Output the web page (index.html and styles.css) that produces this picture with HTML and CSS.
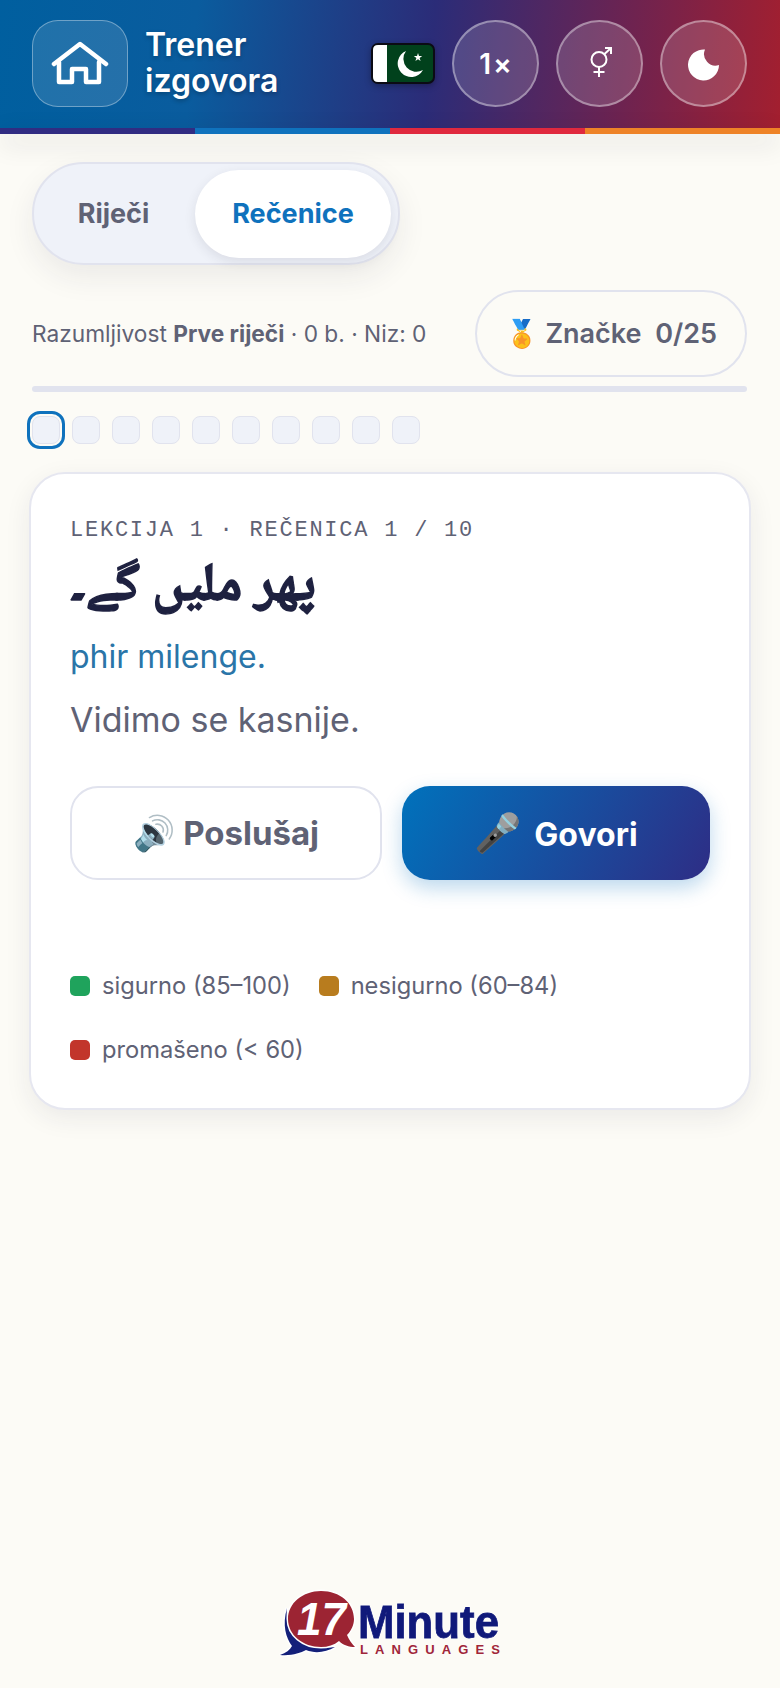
FILE: index.html
```html
<!DOCTYPE html>
<html lang="hr">
  <head>
    <meta charset="utf-8" />
    <title>Trener izgovora</title>
    <link rel="stylesheet" href="styles.css" />
  </head>
  <body>
    <header class="topbar">
      <a class="home-btn" href="#" aria-label="Home">
        <svg width="58" height="46" viewBox="0 0 58 46" fill="none" stroke="#fff" stroke-width="4.5" stroke-linecap="round" stroke-linejoin="round">
          <path d="M3 23 L29 3 L55 23" />
          <path d="M8 21 V41 H21 V28 H35 V41 H48 V21" />
        </svg>
      </a>
      <div class="app-title">Trener<br />izgovora</div>
      <svg class="flag" width="64" height="41" viewBox="0 0 64 41">
        <rect x="1" y="1" width="62" height="39" rx="6" fill="#01411c" stroke="#0b0b14" stroke-width="2" />
        <path d="M7 2 H16 V39 H7 Q2 39 2 34 V7 Q2 2 7 2 Z" fill="#fff" />
        <path d="M35 8 A13.5 13.5 0 1 0 52 27 A13 13 0 0 1 35 8 Z" fill="#fff" />
        <path d="M47 10 L48 13 L51.2 13 L48.6 15 L49.6 18 L47 16.2 L44.4 18 L45.4 15 L42.8 13 L46 13 Z" fill="#fff" />
      </svg>
      <button class="round-btn speed">1×</button>
      <button class="round-btn" aria-label="Spol">
        <svg class="gender-icon" width="24" height="30" viewBox="0 0 24 30" fill="none" stroke="#fff" stroke-width="2">
          <circle cx="10" cy="12.5" r="7.5" />
          <path d="M10 20 V30 M4.5 25 H15.5 M15.5 7 L22 1 M16 1 H22 V7" />
        </svg>
      </button>
      <button class="round-btn" aria-label="Tema">
        <svg class="moon-icon" width="32" height="32" viewBox="0 0 32 32" fill="#fff">
          <path d="M17 0.5 A15.5 15.5 0 1 0 31 16 A11.5 11.5 0 0 1 17 0.5 Z" />
        </svg>
      </button>
    </header>
    <div class="stripe">
      <span class="s1"></span><span class="s2"></span><span class="s3"></span><span class="s4"></span>
    </div>

    <main class="content">
      <div class="mode-toggle">
        <button class="mode">Riječi</button>
        <button class="mode active">Rečenice</button>
      </div>

      <div class="status-row">
        <div class="status">Razumljivost <b>Prve riječi</b> · 0 b. · Niz: 0</div>
        <button class="badges"><span class="emoji">🏅</span> Značke&nbsp; 0/25</button>
      </div>

      <div class="progress"></div>

      <div class="steps">
        <span class="step current"></span>
        <span class="step"></span>
        <span class="step"></span>
        <span class="step"></span>
        <span class="step"></span>
        <span class="step"></span>
        <span class="step"></span>
        <span class="step"></span>
        <span class="step"></span>
        <span class="step"></span>
      </div>

      <section class="card">
        <div class="lesson">LEKCIJA 1 · REČENICA 1 / 10</div>
        <div class="urdu" lang="ur" dir="rtl">پھر ملیں گے۔</div>
        <div class="translit">phir milenge.</div>
        <div class="meaning">Vidimo se kasnije.</div>
        <div class="actions">
          <button class="action listen"><span class="emoji">🔊</span> Poslušaj</button>
          <button class="action speak"><span class="emoji">🎤</span> Govori</button>
        </div>
        <div class="legend">
          <span class="legend-item"><i class="dot green"></i>sigurno (85–100)</span>
          <span class="legend-item"><i class="dot amber"></i>nesigurno (60–84)</span>
          <span class="legend-item"><i class="dot red"></i>promašeno (&lt; 60)</span>
        </div>
      </section>

      <footer class="footer">
        <svg width="260" height="118" viewBox="0 0 260 118">
          <path d="M27 38 C22 55 26 68 32 76 C30 80 26 83 20 85 C32 86 40 83 46 80 C56 84 66 82 75 77 C60 79 40 76 31 62 C27 54 26 46 27 38 Z" fill="#14207a" stroke="#fff" stroke-width="3" paint-order="stroke" />
          <path d="M61 21 C80 21 94 33 94 49 C94 55 91 61 87 65 C89 70 92 74 95 77 C89 77 83 75 79 71 C74 75 68 77 61 77 C43 77 28 65 28 49 C28 33 43 21 61 21 Z" fill="#9c2433" stroke="#fff" stroke-width="3" paint-order="stroke" />
          <text class="logo-17" x="37" y="65" textLength="49" lengthAdjust="spacingAndGlyphs">17</text>
          <text class="logo-minute" x="98" y="68" textLength="141" lengthAdjust="spacingAndGlyphs">Minute</text>
          <text class="logo-lang" x="100" y="84" textLength="140">LANGUAGES</text>
        </svg>
      </footer>
    </main>
  </body>
</html>
```

FILE: styles.css
```css
* {
  box-sizing: border-box;
}
html,
body {
  margin: 0;
  padding: 0;
}
body {
  width: 780px;
  height: 1688px;
  overflow: hidden;
  display: flex;
  flex-direction: column;
  background-color: #fcfbf6;
  font-family: Inter, "Noto Sans", sans-serif;
  color: #5f6275;
}
button {
  font-family: inherit;
  cursor: pointer;
}
.emoji {
  font-family: "Noto Color Emoji", sans-serif;
  font-weight: 400;
}

/* top bar */
.topbar {
  height: 128px;
  padding: 0 33px 1px 32px;
  display: flex;
  align-items: center;
  background: linear-gradient(96deg, #005f9f 0%, #0a5c9e 25%, #2b2c78 55%, #6e2350 80%, #a31f2f 100%);
}
.home-btn {
  width: 96px;
  height: 87px;
  display: flex;
  align-items: center;
  justify-content: center;
  border: 1.5px solid rgba(255, 255, 255, 0.35);
  border-radius: 26px;
  background-color: rgba(255, 255, 255, 0.12);
}
.app-title {
  margin-left: 17px;
  color: #fff;
  font-size: 32px;
  font-weight: 600;
  line-height: 36px;
  position: relative;
  top: -1px;
  text-shadow: 0 2px 4px rgba(0, 0, 0, 0.25);
}
.flag {
  margin-left: auto;
  margin-right: 17px;
  filter: drop-shadow(0 2px 3px rgba(0, 0, 0, 0.3));
}
.round-btn {
  width: 87px;
  height: 87px;
  padding: 0;
  display: flex;
  align-items: center;
  justify-content: center;
  margin-left: 17px;
  border: 2px solid rgba(255, 255, 255, 0.38);
  border-radius: 50%;
  background-color: rgba(255, 255, 255, 0.15);
  color: #fff;
}
.flag + .round-btn {
  margin-left: 0;
}
.speed {
  padding-left: 2px;
  font-size: 28px;
  font-weight: 600;
  letter-spacing: 2px;
}
.gender-icon {
  margin: -4px 0 0 2px;
}
.moon-icon {
  margin-top: 3px;
}
.stripe {
  height: 6px;
  display: flex;
  box-shadow: 0 8px 26px rgba(30, 30, 40, 0.2);
}
.stripe span {
  flex: 1;
}
.s1 {
  background-color: #312c82;
}
.s2 {
  background-color: #0f72bd;
}
.s3 {
  background-color: #e0293e;
}
.s4 {
  background-color: #ee8327;
}

/* main column */
.content {
  flex: 1;
  display: flex;
  flex-direction: column;
  padding: 28px 33px 0 32px;
}
.mode-toggle {
  width: 368px;
  height: 103px;
  display: flex;
  align-items: center;
  justify-content: space-between;
  padding: 0 7px 0 6px;
  border: 2px solid #e1e3ee;
  border-radius: 52px;
  background-color: #eff2f9;
  box-shadow: 0 12px 30px rgba(40, 40, 60, 0.08);
}
.mode {
  height: 88px;
  padding: 0;
  border: 0;
  border-radius: 44px;
  background: none;
  font-size: 27px;
  font-weight: 700;
  color: #5f6275;
}
.mode:first-child {
  width: 147px;
}
.mode.active {
  width: 196px;
  background-color: #fff;
  color: #0f72bd;
  box-shadow: 0 4px 12px rgba(40, 40, 60, 0.1);
}
.status-row {
  margin-top: 25px;
  display: flex;
  align-items: center;
  justify-content: space-between;
}
.status {
  font-size: 22.7px;
}
.badges {
  width: 272px;
  height: 87px;
  padding: 0;
  border: 2px solid #e1e3ee;
  border-radius: 44px;
  background: none;
  font-size: 27px;
  font-weight: 600;
  color: #5f6275;
}
.progress {
  height: 6px;
  margin-top: 9px;
  border-radius: 3px;
  background-color: #e1e3ee;
}
.steps {
  margin-top: 24px;
  display: flex;
  gap: 12px;
}
.step {
  width: 28px;
  height: 28px;
  border: 1.5px solid #e1e3ee;
  border-radius: 8px;
  background-color: #eff2f9;
}
.step.current {
  outline: 3.5px solid #0f72bd;
  outline-offset: 2px;
}

/* card */
.card {
  margin: 28px -4px 0 -3px;
  height: 638px;
  padding: 43px 39px 0;
  border: 2px solid #e6e7f0;
  border-radius: 36px;
  background-color: #fff;
  box-shadow: 0 8px 26px rgba(40, 40, 60, 0.08);
}
.lesson {
  font-family: "Liberation Mono", monospace;
  font-size: 22px;
  letter-spacing: 0.08em;
  line-height: 28px;
  color: #5f6275;
}
.urdu {
  margin-top: 8px;
  font-family: "Noto Naskh Arabic", "Noto Sans Arabic", "DejaVu Sans", sans-serif;
  font-size: 54px;
  font-weight: 700;
  line-height: 70px;
  text-align: left;
  color: #1e2140;
  -webkit-text-stroke: 1.4px #1e2140;
}
.translit {
  margin-top: 14px;
  font-size: 32px;
  line-height: 40px;
  color: #2a75a8;
}
.meaning {
  margin-top: 21px;
  font-size: 34px;
  line-height: 44px;
  color: #5f6275;
}
.action .emoji {
  font-size: 34px;
}
.actions {
  margin-top: 44px;
  display: flex;
  gap: 20px;
}
.action {
  flex: 1 1 0;
  height: 94px;
  padding: 0;
  border-radius: 28px;
  font-size: 33px;
  font-weight: 700;
}
.listen {
  border: 2px solid #e1e3ee;
  background-color: #fff;
  color: #5f6275;
}
.speak {
  border: 0;
  background: linear-gradient(120deg, #0072bc, #2e2d85);
  color: #fff;
  font-size: 32px;
  box-shadow: 0 8px 20px rgba(15, 114, 189, 0.28);
}
.action.speak .emoji {
  margin-right: 5px;
  font-size: 38px;
}
.legend {
  margin-top: 91px;
  display: flex;
  flex-wrap: wrap;
  gap: 34px 28px;
}
.legend-item {
  display: flex;
  align-items: center;
  gap: 12px;
  font-size: 23.7px;
  line-height: 30px;
}
.dot {
  width: 20px;
  height: 20px;
  border-radius: 5px;
}
.green {
  background-color: #1fa35c;
}
.amber {
  background-color: #b87c1e;
}
.red {
  background-color: #c2352b;
}

/* footer logo */
.footer {
  margin-top: auto;
  display: flex;
  justify-content: center;
}
.logo-17 {
  font-family: "Liberation Sans", sans-serif;
  font-size: 46px;
  font-style: italic;
  font-weight: 700;
  fill: #fff;
}
.logo-minute {
  font-family: "Liberation Sans", sans-serif;
  font-size: 47px;
  font-weight: 700;
  fill: #10197a;
  stroke: #10197a;
  stroke-width: 0.8px;
  filter: drop-shadow(0 0 1.5px #fff);
}
.logo-lang {
  font-family: "Liberation Sans", sans-serif;
  font-size: 13px;
  font-weight: 700;
  fill: #a0263a;
}
```
